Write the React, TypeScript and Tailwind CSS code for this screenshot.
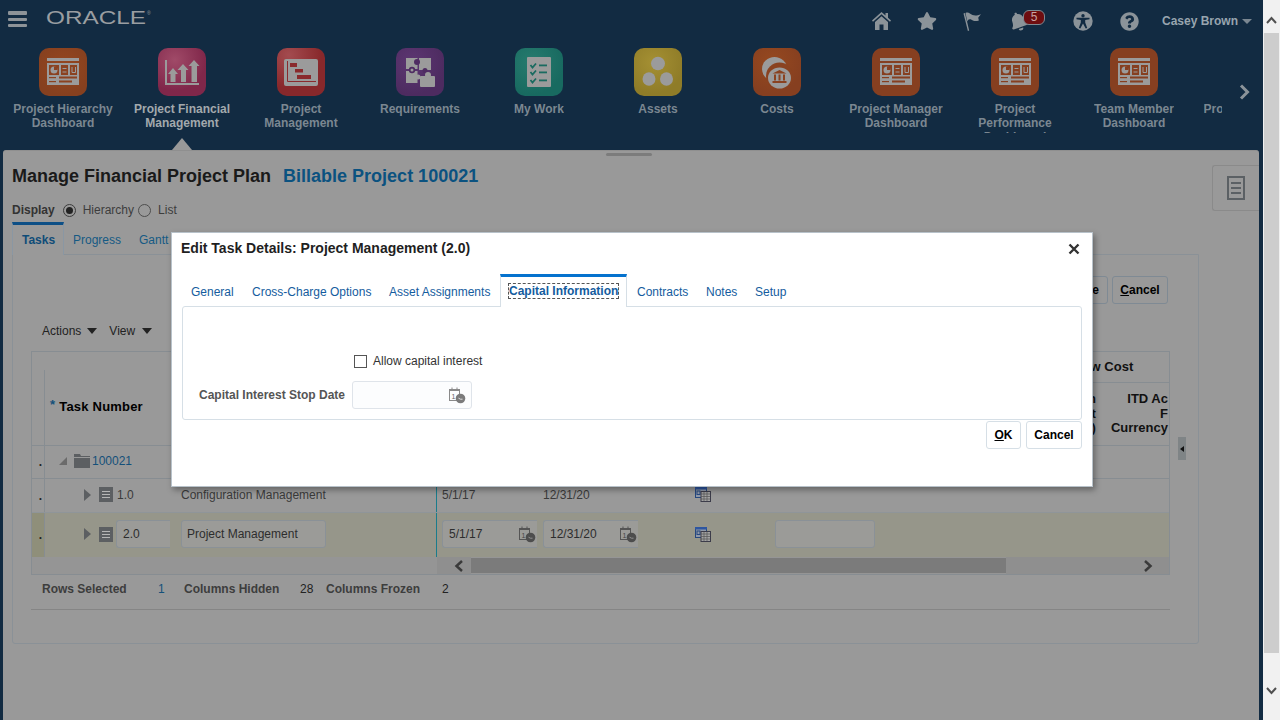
import React from "react";
import { FaQuestionCircle, FaStar, FaBell } from "react-icons/fa";

const G = "#9b9b9b";

function Dash({ c }: { c: string }) {
  return (
    <svg width="48" height="48" viewBox="0 0 48 48">
      <rect x="8" y="10" width="32" height="3" fill={G} />
      <rect x="8" y="15" width="32" height="22" fill={G} />
      <rect x="10" y="17" width="10" height="10" fill={c} />
      <circle cx="15" cy="22" r="3.5" fill={G} />
      <rect x="15" y="18.5" width="3.5" height="3.5" fill={c} />
      <rect x="22" y="17" width="7" height="10" fill={c} />
      <rect x="23.5" y="20" width="4" height="1" fill={G} />
      <rect x="23.5" y="23.5" width="4" height="1" fill={G} />
      <rect x="31" y="17" width="7" height="10" fill={c} />
      <path d="M33 19v5.5h3.5V19" fill="none" stroke={G} strokeWidth="1" />
      <rect x="10" y="29" width="7" height="1.2" fill={c} />
      <rect x="10" y="33" width="7" height="1.2" fill={c} />
      <rect x="20" y="28.5" width="18" height="2" fill={c} />
      <rect x="20" y="32.5" width="13" height="2" fill={c} />
    </svg>
  );
}

function Chart() {
  return (
    <svg width="48" height="48" viewBox="0 0 48 48" fill={G}>
      <rect x="7" y="12" width="2" height="25" />
      <rect x="7" y="35" width="34" height="2" />
      <path d="M15 20l5 6h-2.5v8h-5v-8H10z" />
      <path d="M25 16l5.5 6H28v12h-5V22h-3.5z" />
      <path d="M36 12l5.5 6H39v16h-5.500V18h-3z" />
    </svg>
  );
}

function Gantt({ c }: { c: string }) {
  return (
    <svg width="48" height="48" viewBox="0 0 48 48">
      <rect x="7" y="11" width="34" height="27" rx="2" fill={G} />
      <path d="M10.500 13v20.500H39" fill="none" stroke={c} strokeWidth="1" />
      <rect x="13" y="15" width="7" height="4" fill={c} />
      <rect x="18" y="21" width="8" height="3.500" fill={c} />
      <rect x="20" y="27" width="14" height="4" fill={c} />
    </svg>
  );
}

function Puzzle({ c }: { c: string }) {
  return (
    <svg width="48" height="48" viewBox="0 0 48 48">
      <rect x="10" y="10" width="11.500" height="11" fill={G} />
      <rect x="23" y="10" width="12" height="12" fill={G} />
      <rect x="10" y="23" width="11.500" height="12" fill={G} />
      <circle cx="21" cy="14" r="3" fill={c} />
      <circle cx="16" cy="22" r="3.200" fill={c} />
      <circle cx="16" cy="22" r="1.500" fill={G} />
      <circle cx="29" cy="22.500" r="2.500" fill={c} />
      <circle cx="22" cy="29" r="2.500" fill={G} />
      <rect x="24" y="28" width="15" height="11" rx="1" fill={G} />
      <circle cx="32" cy="27" r="3" fill={G} />
    </svg>
  );
}

function Check({ c }: { c: string }) {
  const rows = [17, 24, 32];
  return (
    <svg width="48" height="48" viewBox="0 0 48 48">
      <rect x="12" y="9" width="24" height="30" rx="1" fill={G} />
      {rows.map((y) => (
        <g key={y}>
          <path d={`M15.500 ${y}l2 2.500 3.500-4`} fill="none" stroke={c} strokeWidth="1.800" />
          <rect x="24" y={y - 0.500} width="8" height="1.800" fill={c} />
        </g>
      ))}
    </svg>
  );
}

function Assets() {
  return (
    <svg width="48" height="48" viewBox="0 0 48 48" fill={G}>
      <ellipse cx="24" cy="15.500" rx="7" ry="6.800" />
      <ellipse cx="15" cy="31" rx="6.500" ry="6.800" />
      <ellipse cx="32.500" cy="31" rx="6.500" ry="6.800" />
    </svg>
  );
}

function Costs({ c }: { c: string }) {
  return (
    <svg width="48" height="48" viewBox="0 0 48 48">
      <ellipse cx="21.500" cy="21" rx="12.500" ry="12" fill={G} />
      <circle cx="26.500" cy="28" r="13.500" fill={c} />
      <ellipse cx="26.500" cy="30" rx="11.500" ry="10.500" fill={G} />
      <path d="M26.500 22l7 3.500h-14z" fill={c} />
      <rect x="21" y="26.500" width="2" height="6" fill={c} />
      <rect x="25.500" y="26.500" width="2" height="6" fill={c} />
      <rect x="30" y="26.500" width="2" height="6" fill={c} />
      <rect x="19.500" y="33" width="14" height="2" fill={c} />
    </svg>
  );
}

function CalIcon() {
  return (
    <svg width="17" height="17" viewBox="0 0 17 17">
      <rect x="0.500" y="2.500" width="10" height="11" fill="none" stroke="#8a8a8a" />
      <rect x="0" y="2" width="11" height="2" fill="#8a8a8a" />
      <rect x="2.500" y="0.500" width="1" height="2" fill="#8a8a8a" />
      <rect x="7.500" y="0.500" width="1" height="2" fill="#8a8a8a" />
      <text x="2.600" y="11.500" fontSize="7" fill="#666" fontFamily="Liberation Sans">1</text>
      <circle cx="11.500" cy="11.500" r="4.800" fill="#7b7b7b" />
      <path d="M9.500 11.200l2 1h2" fill="none" stroke="#eee" strokeWidth="0.900" />
    </svg>
  );
}

function CalIconDim() {
  return (
    <svg width="17" height="17" viewBox="0 0 17 17">
      <rect x="0.500" y="2.500" width="10" height="11" fill="none" stroke="#555" />
      <rect x="0" y="2" width="11" height="2" fill="#555" />
      <rect x="2.500" y="0.500" width="1" height="2" fill="#555" />
      <rect x="7.500" y="0.500" width="1" height="2" fill="#555" />
      <text x="2.600" y="11.500" fontSize="7" fill="#444" fontFamily="Liberation Sans">1</text>
      <circle cx="11.500" cy="11.500" r="4.800" fill="#4d4d4d" />
      <path d="M9.500 11.200l2 1h2" fill="none" stroke="#999" strokeWidth="0.900" />
    </svg>
  );
}

function WinIcon() {
  return (
    <svg width="16" height="15" viewBox="0 0 16 15">
      <rect x="0.500" y="0.500" width="11" height="10" fill="#8f98a8" stroke="#25477f" />
      <rect x="0" y="0" width="12" height="2.500" fill="#2e56a0" />
      <rect x="2" y="4" width="3" height="3.500" fill="none" stroke="#25477f" />
      <rect x="6" y="4.500" width="9.500" height="10" fill="#a3a3a3" stroke="#3c3c4a" />
      <path d="M6 7h9M6 9.500h9M6 12h9M9 5v9M12 5v9" stroke="#555" strokeWidth="0.700" />
    </svg>
  );
}

function DocBox() {
  return (
    <div className="-mt-[2px] w-[14px] h-[15px] bg-[#5c5f62] flex flex-col items-center justify-center gap-[2px]">
      <div className="w-[8px] h-px bg-[#b5b5b5]" />
      <div className="w-[8px] h-px bg-[#b5b5b5]" />
      <div className="w-[8px] h-px bg-[#b5b5b5]" />
    </div>
  );
}

function Arrow() {
  return <div className="-mt-[2px] w-0 h-0 border-y-[6px] border-y-transparent border-l-[7px] border-l-[#5c5f62]" />;
}

const navItems: { l: string[]; tile: string; icon: React.ReactNode; active?: boolean }[] = [
  { l: ["Project Hierarchy", "Dashboard"], tile: "bg-[radial-gradient(circle_at_50%_40%,#96471f,#86401f_75%)]", icon: <Dash c="#8b4220" /> },
  { l: ["Project Financial", "Management"], tile: "bg-[radial-gradient(circle_at_35%_25%,#a04a68,#80274a_65%)]", icon: <Chart />, active: true },
  { l: ["Project", "Management"], tile: "bg-[radial-gradient(circle_at_25%_15%,#a34b4f,#88282b_60%)]", icon: <Gantt c="#8a2a2d" /> },
  { l: ["Requirements"], tile: "bg-[radial-gradient(circle_at_35%_30%,#5d3672,#4d2b60_70%)]", icon: <Puzzle c="#4f2c62" /> },
  { l: ["My Work"], tile: "bg-[radial-gradient(circle_at_35%_30%,#277b6e,#186a60_70%)]", icon: <Check c="#1a6b60" /> },
  { l: ["Assets"], tile: "bg-[radial-gradient(circle_at_40%_30%,#a59033,#8f7c28_70%)]", icon: <Assets /> },
  { l: ["Costs"], tile: "bg-[radial-gradient(circle_at_40%_30%,#96491f,#863f20_70%)]", icon: <Costs c="#8a4220" /> },
  { l: ["Project Manager", "Dashboard"], tile: "bg-[#863f20]", icon: <Dash c="#863f20" /> },
  { l: ["Project", "Performance", "Dashboard"], tile: "bg-[#863f20]", icon: <Dash c="#863f20" /> },
  { l: ["Team Member", "Dashboard"], tile: "bg-[#863f20]", icon: <Dash c="#863f20" /> },
];

function NavItem({ item }: { item: (typeof navItems)[number] }) {
  return (
    <div className="w-[119px] shrink-0 flex flex-col items-center relative">
      <div className={`w-[48px] h-[48px] rounded-[10px] overflow-hidden ${item.tile}`}>{item.icon}</div>
      <div className={`mt-[6px] h-[31px] overflow-hidden text-center text-[12px] leading-[14px] font-bold ${item.active ? "text-[#a3a9ad]" : "text-[#7b8791]"}`}>
        {item.l.map((t) => (
          <div key={t} className="whitespace-nowrap">{t}</div>
        ))}
      </div>
      {item.active && (
        <div className="mt-[5px] w-0 h-0 border-x-[10px] border-x-transparent border-b-[12px] border-b-[#999999]" />
      )}
    </div>
  );
}

function TopIcons() {
  const c = "#8b9399";
  return (
    <div className="flex items-center">
      <svg className="ml-[872px]" width="19" height="18" viewBox="0 0 19 18" fill={c}>
        <path d="M9.500 0L0 8.500l1 1.300 8.500-7.500 8.500 7.500 1-1.300-3-2.700V1h-2.500v2.500z" />
        <path d="M3 10l6.500-5.800L16 10v8h-4.500v-5.500h-4V18H3z" />
      </svg>
      <FaStar className="ml-[26px]" size={20} color={c} />
      <svg className="ml-[26px]" width="19" height="19" viewBox="0 0 19 19" fill={c}>
        <path d="M0.500 1.500l1.400-.5 4.300 17.500-1.300.4z" />
        <path d="M2.500 1c3-1.500 4.500 1 7 2 2.500.8 5 .5 8.500-.8-1 1.300-2 2.500-2.800 3.500.3 1 .5 1.800.7 2.800-3.400 1.200-5.400.5-7.400-.7-2-1-3.500-.5-4.200 2z" />
      </svg>
      <FaBell className="ml-[27px] rotate-[-20deg]" size={19} color={c} />
      <div className="ml-[-5px] -mt-[8px] relative w-[22px] h-[15px] rounded-[6px] bg-[#6e0d10] border border-[#7e8a92] text-[#c9a3a3] text-[12px] leading-[13px] text-center">5</div>
      <svg className="ml-[28px]" width="20" height="20" viewBox="0 0 20 20">
        <circle cx="10" cy="10" r="9.700" fill={c} />
        <circle cx="10" cy="4.700" r="1.700" fill="#122b42" />
        <path d="M3.500 6.800h13v1.400l-4.300.8v2.500l2 5.500-1.500.5L10 12.500l-2.700 5-1.500-.5 2-5.500V9l-4.300-.8z" fill="#122b42" />
      </svg>
      <FaQuestionCircle className="ml-[27px]" size={19} color={c} />
      <span className="ml-[23px] text-[12px] font-bold text-[#98a5af] whitespace-nowrap">Casey Brown</span>
      <div className="ml-[4px] w-0 h-0 border-x-[5px] border-x-transparent border-t-[5px] border-t-[#7b8791]" />
    </div>
  );
}

function Field({ w, text, children, open, pad = "pl-[6px]" }: { w: string; text?: string; children?: React.ReactNode; open?: boolean; pad?: string }) {
  return (
    <div className={`${w} h-[28px] -mt-[2px] flex items-center justify-between ${pad} border border-[#8a9197] rounded-l-[3px] ${open ? "border-r-0" : "rounded-r-[3px]"} bg-[#9b9b98] text-[12px] text-[#2d2d2d]`}>
      <span>{text}</span>
      {children}
    </div>
  );
}

export default function App() {
  return (
    <div className="relative w-[1280px] h-[720px] overflow-hidden flex bg-[#122b42] [font-family:'Liberation_Sans',Arial,sans-serif] text-[12px]">
      <div className="w-[1263px] h-full flex flex-col">
        {/* Top bar */}
        <div className="h-[42px] relative flex items-center">
          <div className="absolute left-[8px] top-[11px] w-[19px] flex flex-col gap-[3px]">
            <div className="h-[4px] bg-[#8d9398] rounded-[1px]" />
            <div className="h-[3px] bg-[#8d9398] rounded-[1px]" />
            <div className="h-[3px] bg-[#8d9398] rounded-[1px]" />
          </div>
          <div className="absolute left-[46px] top-[6px] text-[18px] leading-[24px] text-[#9a9ea1] origin-left scale-x-[1.35] whitespace-nowrap">ORACLE</div>
          <div className="absolute left-[147px] top-[10px] text-[5px] leading-[6px] text-[#9a9ea1]">®</div>
          <TopIcons />
        </div>
        {/* Launcher strip */}
        <div className="h-[108px] pt-[6px] pl-[3.5px] flex overflow-hidden">
          {navItems.map((n) => (
            <NavItem key={n.l.join()} item={n} />
          ))}
          <div className="w-[18px] ml-[10px] mt-[54px] shrink-0 overflow-hidden text-[12px] leading-[14px] font-bold text-[#7b8791] whitespace-nowrap">Project</div>
          <svg className="ml-[17px] mt-[36px] shrink-0" width="12" height="16" viewBox="0 0 12 16" fill="none" stroke="#8b9399" strokeWidth="3">
            <path d="M2 1.500L8.500 8 2 14.500" />
          </svg>
        </div>
        {/* Panel */}
        <div className="flex-1 ml-[3px] mr-[4px] bg-[#999999] rounded-t-[3px] border-t border-[#8f8f8f] flex flex-col">
          <div className="flex justify-between h-[71px]">
            <div className="pl-[9px]">
              <div className="ml-[594px] mt-[2px] w-[46px] h-[3px] bg-[#7c7c7c] rounded-[2px]" />
              <div className="mt-[10px] h-[20px] flex items-center whitespace-nowrap text-[18px] font-bold">
                <span className="text-[#1a1a1a]">Manage Financial Project Plan</span>
                <span className="ml-[12px] text-[#0b5280]">Billable Project 100021</span>
              </div>
              <div className="mt-[16px] h-[16px] flex items-center text-[12px]">
                <span className="font-bold text-[#333]">Display</span>
                <div className="ml-[8px] w-[13px] h-[13px] rounded-full border border-[#3c3c3c] flex items-center justify-center">
                  <div className="w-[7px] h-[7px] rounded-full bg-[#222]" />
                </div>
                <span className="ml-[7px] text-[#3d3d3d]">Hierarchy</span>
                <div className="ml-[4px] w-[13px] h-[13px] rounded-full border border-[#4d4d4d]" />
                <span className="ml-[7px] text-[#3d3d3d]">List</span>
              </div>
            </div>
            <div className="mt-[14px] w-[47px] h-[46px] border border-r-0 border-[#8a8a8a] rounded-l-[3px] flex items-center justify-center">
              <div className="w-[18px] h-[24px] border-2 border-[#5b6064] flex flex-col items-center justify-center gap-[3px]">
                <div className="w-[10px] h-[2px] bg-[#5b6064]" />
                <div className="w-[10px] h-[2px] bg-[#5b6064]" />
                <div className="w-[10px] h-[2px] bg-[#5b6064]" />
              </div>
            </div>
          </div>
          {/* Tabs */}
          <div className="ml-[9px] h-[33px] flex items-stretch text-[12px] relative z-10 -mb-px">
            <div className="w-[52px] border-t-[3px] border-t-[#0d4f86] border-x border-x-[#8a97a3] bg-[#999999] pl-[9px] pt-[6px] font-bold text-[#0f4c78]">Tasks</div>
            <div className="ml-[9px] pt-[9px] text-[#155a84]">Progress</div>
            <div className="ml-[18px] pt-[9px] text-[#155a84]">Gantt</div>
          </div>
          {/* Tab body */}
          <div className="ml-[9px] w-[1187px] h-[390px] border border-[#8a9197] rounded-b-[3px] flex flex-col">
            <div className="mt-[21px] flex justify-end gap-[4px] pr-[30px] font-bold text-[12px] text-black">
              <div className="w-[120px] h-[28px] border border-[#7f8a94] rounded-[3px] flex items-center justify-end pr-[8px]">Save</div>
              <div className="w-[56px] h-[28px] border border-[#7f8a94] rounded-[3px] flex items-center justify-center"><span><u>C</u>ancel</span></div>
            </div>
            <div className="mt-[18px] h-[18px] ml-[29px] flex items-center text-[12px] text-[#222]">
              <span>Actions</span>
              <div className="ml-[6px] w-0 h-0 border-x-[5px] border-x-transparent border-t-[6px] border-t-[#222]" />
              <span className="ml-[12px]">View</span>
              <div className="ml-[7px] w-0 h-0 border-x-[5px] border-x-transparent border-t-[6px] border-t-[#222]" />
            </div>
            <div className="mt-[11px] flex">
              {/* Table */}
              <div className="ml-[18px] w-[1139px] h-[224px] border border-[#878d92] flex flex-col">
                <div className="h-[94px] flex border-b border-[#878d92] relative">
                  <div className="w-[13px] flex flex-col">
                    <div className="flex-1 border-r border-[#878d92] mt-[18px]" />
                  </div>
                  <div className="pl-[5px] flex items-center h-full pt-[16px] font-bold text-[13px] tracking-[0.2px] text-black whitespace-nowrap">
                    <span className="text-[#14507a] mr-[4px] -mt-[3px]">*</span>Task Number
                  </div>
                  <div className="flex-1" />
                  <div className="w-[100px] flex flex-col overflow-hidden">
                    <div className="h-[31px] border-b border-[#878d92] flex items-center font-bold text-[13px] text-[#111] whitespace-nowrap pl-[5px]">Raw Cost</div>
                    <div className="flex-1 flex justify-between pt-[9px] text-right font-bold text-[13px] leading-[14.5px] text-[#111] overflow-hidden whitespace-nowrap">
                      <div className="pl-[19px]">n<br />t<br />)</div>
                      <div className="pr-[1px]">ITD Ac<br />F<br />Currency</div>
                    </div>
                  </div>
                </div>
                {/* Row 100021 */}
                <div className="h-[33px] flex items-center border-b border-[#878d92]">
                  <div className="w-[13px] h-full border-r border-[#878d92] flex items-center justify-end pr-[2px] font-bold text-[#222]">.</div>
                  <div className="ml-[14px] -mt-[2px] w-0 h-0 border-b-[8px] border-b-[#6b6b6b] border-l-[8px] border-l-transparent" />
                  <svg className="ml-[7px] -mt-[2px]" width="16" height="14" viewBox="0 0 16 14" fill="#5c5f62">
                    <path d="M0 0h6l1 2h9v1H0zM0 4h16v10H0z" />
                  </svg>
                  <span className="ml-[2px] -mt-[2px] text-[#14507a]">100021</span>
                  <div className="ml-[344px] h-full border-l border-[#1a7c8c]" />
                </div>
                {/* Row 1.0 */}
                <div className="h-[34px] flex items-center border-b border-[#8f9599]">
                  <div className="w-[13px] h-full border-r border-[#878d92] flex items-center justify-end pr-[2px] font-bold text-[#222]">.</div>
                  <div className="ml-[39px]"><Arrow /></div>
                  <div className="ml-[8px]"><DocBox /></div>
                  <span className="ml-[4px] -mt-[2px] w-[64px] text-[#3a3a3a]">1.0</span>
                  <span className="-mt-[2px] w-[255px] text-[#3a3a3a]">Configuration Management</span>
                  <div className="h-full border-l border-[#1a7c8c]" />
                  <span className="ml-[5px] -mt-[2px] w-[101px] text-[#3a3a3a]">5/1/17</span>
                  <span className="-mt-[2px] w-[152px] text-[#3a3a3a]">12/31/20</span>
                  <div className="-mt-[2px]"><WinIcon /></div>
                </div>
                {/* Row 2.0 */}
                <div className="h-[44px] flex items-center bg-[#96968a]">
                  <div className="w-[13px] h-full border-r border-[#878d92] flex items-center justify-end pr-[2px] font-bold text-[#222] bg-[#8f8f7a]">.</div>
                  <div className="ml-[39px]"><Arrow /></div>
                  <div className="ml-[8px]"><DocBox /></div>
                  <div className="ml-[3px]"><Field w="w-[54px]" text="2.0" open /></div>
                  <div className="ml-[11px]"><Field w="w-[145px]" text="Project Management" pad="pl-[5px]" /></div>
                  <div className="ml-[110px] h-full border-l border-[#1a7c8c]" />
                  <div className="ml-[5px]"><Field w="w-[95px]" text="5/1/17" open><span className="mr-[1px]"><CalIconDim /></span></Field></div>
                  <div className="ml-[6px]"><Field w="w-[95px]" text="12/31/20" open><span className="mr-[1px]"><CalIconDim /></span></Field></div>
                  <div className="ml-[57px] -mt-[2px]"><WinIcon /></div>
                  <div className="ml-[64px]"><Field w="w-[100px]" /></div>
                </div>
                {/* Scroll */}
                <div className="flex-1 flex bg-[#959595]">
                  <div className="w-[405px]" />
                  <div className="w-[34px] bg-[#8f8f8f] flex items-center justify-center pl-[10px]">
                    <svg width="10" height="12" viewBox="0 0 10 12" fill="none" stroke="#3a3a3a" strokeWidth="2.500"><path d="M8 1L2.500 6 8 11" /></svg>
                  </div>
                  <div className="w-[535px] bg-[#7b7b7b] my-px" />
                  <div className="flex-1 bg-[#8f8f8f] flex items-center justify-end pr-[16px]">
                    <svg width="10" height="12" viewBox="0 0 10 12" fill="none" stroke="#3a3a3a" strokeWidth="2.500"><path d="M2 1l5.500 5L2 11" /></svg>
                  </div>
                </div>
              </div>
              <div className="ml-[8px] mt-[86px] w-[8px] h-[23px] bg-[#7f8486] flex items-center justify-center">
                <div className="w-0 h-0 border-y-[3px] border-y-transparent border-r-[4px] border-r-[#111]" />
              </div>
            </div>
            {/* Status */}
            <div className="ml-[29px] mt-[6px] h-[16px] flex items-center text-[12px]">
              <span className="w-[116px] font-bold text-[#3d3d3d]">Rows Selected</span>
              <span className="w-[26px] text-[#14507a]">1</span>
              <span className="w-[116px] font-bold text-[#3d3d3d]">Columns Hidden</span>
              <span className="w-[26px] text-[#222]">28</span>
              <span className="w-[116px] font-bold text-[#3d3d3d]">Columns Frozen</span>
              <span className="text-[#222]">2</span>
            </div>
            <div className="ml-[18px] mt-[12px] w-[1139px] h-px bg-[#858585]" />
          </div>
        </div>
      </div>

      {/* Browser scrollbar */}
      <div className="w-[17px] h-full bg-[#f1f1f1] flex flex-col">
        <div className="h-[33px] flex items-start justify-center pt-[16px]">
          <svg width="11" height="8" viewBox="0 0 11 8" fill="none" stroke="#505050" strokeWidth="2"><path d="M1 7l4.500-5L10 7" /></svg>
        </div>
        <div className="mx-px w-[15px] h-[620px] bg-[#cdcdcd]" />
        <div className="flex-1 flex items-center justify-center pt-[8px]">
          <svg width="11" height="8" viewBox="0 0 11 8" fill="none" stroke="#505050" strokeWidth="2"><path d="M1 1l4.500 5L10 1" /></svg>
        </div>
      </div>

      {/* Dialog */}
      <div className="absolute left-[171px] top-[232px] w-[922px] h-[255px] bg-white border border-[#b8c2ca] shadow-[2px_3px_6px_rgba(0,0,0,0.35)] flex flex-col">
        <div className="h-[31px] pl-[9px] pr-[12px] flex items-center justify-between">
          <span className="text-[14px] font-bold text-[#1f1f1f] whitespace-nowrap">Edit Task Details: Project Management (2.0)</span>
          <svg width="12" height="12" viewBox="0 0 12 12" stroke="#333" strokeWidth="2.400"><path d="M1.500 1.500l9 9M10.500 1.500l-9 9" /></svg>
        </div>
        <div className="mt-[10px] ml-[10px] h-[33px] flex text-[12px] text-[#145c9e] relative z-10 -mb-px">
          <div className="w-[61px] pl-[9px] pt-[9px]">General</div>
          <div className="w-[137px] pl-[9px] pt-[9px]">Cross-Charge Options</div>
          <div className="w-[120px] pl-[9px] pt-[9px]">Asset Assignments</div>
          <div className="w-[127px] border-t-[3px] border-t-[#0572ce] border-x border-x-[#d6dfe6] bg-white pl-[8px] pt-[7px]">
            <div className="w-[109px] h-[14px] outline-1 outline-dashed outline-[#555] leading-[14px] font-bold text-[#145c9e] whitespace-nowrap">Capital Information</div>
          </div>
          <div className="w-[70px] pl-[10px] pt-[9px]">Contracts</div>
          <div className="w-[49px] pl-[9px] pt-[9px]">Notes</div>
          <div className="w-[50px] pl-[9px] pt-[9px]">Setup</div>
        </div>
        <div className="ml-[10px] w-[900px] h-[114px] border border-[#d6dfe6] rounded-[3px] flex flex-col">
          <div className="mt-[47px] ml-[171px] h-[14px] flex items-center">
            <div className="w-[13px] h-[13px] border border-[#555] bg-white" />
            <span className="ml-[6px] text-[12px] text-[#333]">Allow capital interest</span>
          </div>
          <div className="mt-[13px] flex items-center">
            <span className="w-[162px] text-right text-[12px] font-bold text-[#555]">Capital Interest Stop Date</span>
            <div className="ml-[7px] w-[120px] h-[28px] border border-[#dfe4ea] rounded-[3px] bg-[#fcfdfe] flex items-center justify-end pr-[5px]">
              <CalIcon />
            </div>
          </div>
        </div>
        <div className="mt-[1px] ml-[814px] flex gap-[5px] text-[12px] font-bold text-black">
          <div className="w-[35px] h-[28px] border border-[#d6dfe6] rounded-[3px] flex items-center justify-center"><span><u>O</u>K</span></div>
          <div className="w-[56px] h-[28px] border border-[#d6dfe6] rounded-[3px] flex items-center justify-center">Cancel</div>
        </div>
      </div>
    </div>
  );
}
